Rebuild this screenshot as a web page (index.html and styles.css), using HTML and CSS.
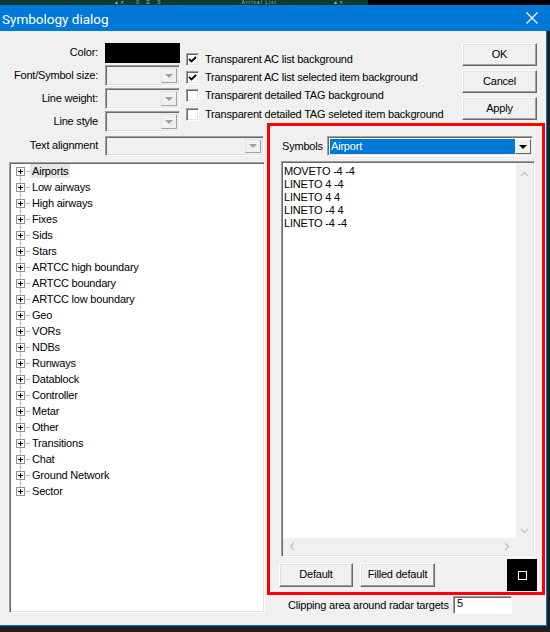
FILE: index.html
```html
<!DOCTYPE html>
<html lang="en">
<head>
  <meta charset="UTF-8">
  <title>Symbology dialog</title>
  <link rel="stylesheet" href="styles.css">
</head>
<body>
  <!-- radar screen strip behind the dialog -->
  <div class="strip">
    <div class="strip-bar">
      <span class="strip-txt s1">&#9650; &#10005;</span>
      <span class="strip-txt s2">0 E S</span>
      <span class="strip-txt s3">Arrival List</span>
      <span class="strip-txt s4">&#9650; &#10005;</span>
    </div>
  </div>

  <div class="window">
    <div class="titlebar">
      <span class="title">Symbology dialog</span>
      <svg class="close" viewBox="0 0 12 12" width="12" height="12">
        <path d="M0.5 0.5 L11.5 11.5 M11.5 0.5 L0.5 11.5" stroke="#fff" stroke-width="1.2" fill="none"/>
      </svg>
    </div>

    <div class="client">
      <!-- Left side -->
      <div class="col-left">
        <div class="upper">
          <div class="form">
            <div class="row"><span class="lbl">Color:</span><div class="swatch"></div></div>
            <div class="row"><span class="lbl">Font/Symbol size:</span><div class="combo"><span class="drop"><i class="tri"></i></span></div></div>
            <div class="row"><span class="lbl">Line weight:</span><div class="combo"><span class="drop"><i class="tri"></i></span></div></div>
            <div class="row"><span class="lbl">Line style</span><div class="combo"><span class="drop"><i class="tri"></i></span></div></div>
          </div>
          <div class="checks">
            <div class="check"><span class="box"><svg viewBox="0 0 11 11" width="11" height="11"><path d="M2 5 L4.5 7.5 L9 3" stroke="#000" stroke-width="1.8" fill="none"/></svg></span>Transparent AC list background</div>
            <div class="check"><span class="box"><svg viewBox="0 0 11 11" width="11" height="11"><path d="M2 5 L4.5 7.5 L9 3" stroke="#000" stroke-width="1.8" fill="none"/></svg></span>Transparent AC list selected item background</div>
            <div class="check"><span class="box"></span>Transparent detailed TAG background</div>
            <div class="check"><span class="box"></span>Transparent detailed TAG seleted item background</div>
          </div>
        </div>

        <div class="row align-row"><span class="lbl">Text alignment</span><div class="combo wide"><span class="drop"><i class="tri"></i></span></div></div>

        <div class="tree">
          <div class="node"><span class="plus"></span><span class="dots"></span><span class="name sel">Airports</span></div>
          <div class="node"><span class="plus"></span><span class="dots"></span><span class="name">Low airways</span></div>
          <div class="node"><span class="plus"></span><span class="dots"></span><span class="name">High airways</span></div>
          <div class="node"><span class="plus"></span><span class="dots"></span><span class="name">Fixes</span></div>
          <div class="node"><span class="plus"></span><span class="dots"></span><span class="name">Sids</span></div>
          <div class="node"><span class="plus"></span><span class="dots"></span><span class="name">Stars</span></div>
          <div class="node"><span class="plus"></span><span class="dots"></span><span class="name">ARTCC high boundary</span></div>
          <div class="node"><span class="plus"></span><span class="dots"></span><span class="name">ARTCC boundary</span></div>
          <div class="node"><span class="plus"></span><span class="dots"></span><span class="name">ARTCC low boundary</span></div>
          <div class="node"><span class="plus"></span><span class="dots"></span><span class="name">Geo</span></div>
          <div class="node"><span class="plus"></span><span class="dots"></span><span class="name">VORs</span></div>
          <div class="node"><span class="plus"></span><span class="dots"></span><span class="name">NDBs</span></div>
          <div class="node"><span class="plus"></span><span class="dots"></span><span class="name">Runways</span></div>
          <div class="node"><span class="plus"></span><span class="dots"></span><span class="name">Datablock</span></div>
          <div class="node"><span class="plus"></span><span class="dots"></span><span class="name">Controller</span></div>
          <div class="node"><span class="plus"></span><span class="dots"></span><span class="name">Metar</span></div>
          <div class="node"><span class="plus"></span><span class="dots"></span><span class="name">Other</span></div>
          <div class="node"><span class="plus"></span><span class="dots"></span><span class="name">Transitions</span></div>
          <div class="node"><span class="plus"></span><span class="dots"></span><span class="name">Chat</span></div>
          <div class="node"><span class="plus"></span><span class="dots"></span><span class="name">Ground Network</span></div>
          <div class="node"><span class="plus"></span><span class="dots"></span><span class="name">Sector</span></div>
        </div>
      </div>

      <!-- Right side -->
      <div class="col-right">
        <div class="btns">
          <button class="btn">OK</button>
          <button class="btn">Cancel</button>
          <button class="btn">Apply</button>
        </div>

        <div class="symbols-panel">
          <div class="sym-row">
            <span class="sym-lbl">Symbols</span>
            <div class="sym-combo">
              <span class="sym-value">Airport</span>
              <span class="drop dark"><i class="tri"></i></span>
            </div>
          </div>

          <div class="editor">
            <div class="editor-text">MOVETO -4 -4<br>LINETO 4 -4<br>LINETO 4 4<br>LINETO -4 4<br>LINETO -4 -4</div>
            <div class="vscroll">
              <svg viewBox="0 0 9 6" width="9" height="6"><path d="M1 5 L4.5 1.5 L8 5" stroke="#c8c8c8" stroke-width="1.5" fill="none"/></svg>
              <svg viewBox="0 0 9 6" width="9" height="6"><path d="M1 1 L4.5 4.5 L8 1" stroke="#c8c8c8" stroke-width="1.5" fill="none"/></svg>
            </div>
            <div class="hscroll">
              <svg viewBox="0 0 6 9" width="6" height="9"><path d="M5 1 L1.5 4.5 L5 8" stroke="#c8c8c8" stroke-width="1.5" fill="none"/></svg>
              <svg viewBox="0 0 6 9" width="6" height="9"><path d="M1 1 L4.5 4.5 L1 8" stroke="#c8c8c8" stroke-width="1.5" fill="none"/></svg>
            </div>
            <div class="corner"></div>
          </div>

          <div class="panel-btns">
            <button class="btn small">Default</button>
            <button class="btn small filled">Filled default</button>
            <div class="preview"><span class="preview-sq"></span></div>
          </div>
        </div>

        <div class="clip-row">
          <span class="clip-lbl">Clipping area around radar targets</span>
          <div class="clip-input">5</div>
        </div>
      </div>
    </div>
  </div>
</body>
</html>
```

FILE: styles.css
```css
/* General */
body {
  margin: 0;
  width: 550px;
  height: 632px;
  overflow: hidden;
  background-color: #1f1f1f;
  font-family: "Liberation Sans", Arial, sans-serif;
  font-size: 11px;
  letter-spacing: -0.2px;
  color: #000;
}

/* Radar strip behind the dialog */
.strip {
  height: 5px;
  display: flex;
  background-color: #000;
}

.strip-bar {
  width: 368px;
  display: flex;
  overflow: hidden;
  background-color: #0d3b2f;
  color: #9fb8ae;
  font-size: 5px;
  line-height: 5px;
  letter-spacing: 0;
}

.strip-txt {
  white-space: nowrap;
}

.s1 { margin-left: 114px; }
.s2 { margin-left: 12px; letter-spacing: 3px; }
.s3 { margin-left: 78px; letter-spacing: 1px; }
.s4 { margin-left: 56px; }

/* Window */
.window {
  width: 547px;
}

.titlebar {
  width: 550px;
  height: 26px;
  background-color: #0078d7;
  display: flex;
  align-items: center;
  justify-content: space-between;
}

.title {
  margin-left: 2px;
  margin-top: 1px;
  color: #fff;
  font-family: Roboto, "Noto Sans", sans-serif;
  font-size: 13.5px;
  letter-spacing: 0;
}

.close {
  margin-right: 12px;
}

.client {
  width: 546px;
  height: 594px;
  background-color: #f0f0f0;
  border-right: 1px solid #0078d7;
  border-bottom: 1px solid #0078d7;
  display: flex;
}

/* Left column */
.col-left {
  width: 266px;
  padding-top: 11px;
  display: flex;
  flex-direction: column;
}

.upper {
  display: flex;
}

.form {
  width: 180px;
  flex-shrink: 0;
}

.row {
  display: flex;
  align-items: center;
  height: 21px;
  margin-bottom: 2px;
}

.lbl {
  width: 98px;
  text-align: right;
  margin-right: 7px;
  padding-bottom: 2px;
  white-space: nowrap;
}

.swatch {
  width: 75px;
  height: 20px;
  background-color: #000;
}

.combo {
  width: 75px;
  height: 21px;
  box-sizing: border-box;
  background-color: #f0f0f0;
  border: 1px solid;
  border-color: #a0a0a0 #fff #fff #a0a0a0;
  box-shadow: inset 1px 1px #696969, inset -1px -1px #e3e3e3;
  display: flex;
  justify-content: flex-end;
  padding: 2px;
}

.combo.wide {
  width: 159px;
  height: 20px;
}

.drop {
  width: 16px;
  flex-shrink: 0;
  box-sizing: border-box;
  background-color: #f0f0f0;
  border: 1px solid;
  border-color: #e3e3e3 #a0a0a0 #a0a0a0 #e3e3e3;
  display: flex;
  align-items: center;
  justify-content: center;
}

.tri {
  width: 0;
  height: 0;
  border-left: 4px solid transparent;
  border-right: 4px solid transparent;
  border-top: 4px solid #a0a0a0;
}

.drop.dark {
  border-color: #fff #696969 #696969 #fff;
}

.drop.dark .tri {
  border-top-color: #000;
}

.checks {
  margin-left: 6px;
  padding-top: 11px;
  width: 80px;
  white-space: nowrap;
}

.check {
  height: 18px;
  display: flex;
  align-items: flex-start;
  line-height: 12px;
}

.check:last-child {
  margin-top: 1px;
}

.box {
  width: 13px;
  height: 13px;
  flex-shrink: 0;
  box-sizing: border-box;
  margin-right: 6px;
  background-color: #fff;
  border: 1px solid;
  border-color: #a0a0a0 #fff #fff #a0a0a0;
  box-shadow: inset 1px 1px #696969, inset -1px -1px #e3e3e3;
  display: flex;
  align-items: center;
  justify-content: center;
}

.align-row {
  margin-top: 2px;
  height: 20px;
}

/* Tree */
.tree {
  margin: 4px 0 0 9px;
  width: 256px;
  height: 451px;
  box-sizing: border-box;
  background-color: #fff;
  border: 1px solid;
  border-color: #a0a0a0 #fff #fff #a0a0a0;
  box-shadow: inset 1px 1px #696969, inset -1px -1px #e3e3e3;
  padding: 0 0 0 6px;
}

.node {
  position: relative;
  height: 16px;
  display: flex;
  align-items: center;
}

.node::before {
  content: "";
  position: absolute;
  left: 4px;
  top: 0;
  bottom: 0;
  border-left: 1px dotted #a0a0a0;
}

.node:first-child::before {
  top: 8px;
}

.node:last-child::before {
  bottom: 8px;
}

.plus {
  position: relative;
  z-index: 1;
  width: 9px;
  height: 9px;
  flex-shrink: 0;
  box-sizing: border-box;
  border: 1px solid #919191;
  background-color: #fff;
}

.plus::before {
  content: "";
  position: absolute;
  left: 1px;
  top: 3px;
  width: 5px;
  height: 1px;
  background-color: #000;
}

.plus::after {
  content: "";
  position: absolute;
  left: 3px;
  top: 1px;
  width: 1px;
  height: 5px;
  background-color: #000;
}

.dots {
  width: 4px;
  border-top: 1px dotted #a0a0a0;
  margin-left: 1px;
}

.name {
  padding: 1px 2px;
  white-space: nowrap;
}

.name.sel {
  background-color: #e6e6e6;
}

/* Right column */
.col-right {
  width: 280px;
  display: flex;
  flex-direction: column;
}

.btns {
  padding-top: 12px;
  margin-left: 196px;
  display: flex;
  flex-direction: column;
}

.btn {
  width: 75px;
  height: 23px;
  margin: 0 0 4px 0;
  padding: 0 0 2px 0;
  box-sizing: border-box;
  background-color: #f0f0f0;
  border: 1px solid;
  border-color: #fff #696969 #696969 #fff;
  box-shadow: inset -1px -1px #a0a0a0, inset 1px 1px #e3e3e3;
  font-family: "Liberation Sans", Arial, sans-serif;
  font-size: 11px;
  letter-spacing: -0.2px;
  color: #000;
}

.btns .btn:last-child {
  margin-bottom: 0;
}

.symbols-panel {
  margin: 3px 0 0 1px;
  width: 278px;
  height: 472px;
  box-sizing: border-box;
  border: 3px solid #f00;
  display: flex;
  flex-direction: column;
}

.sym-row {
  display: flex;
  align-items: center;
  height: 20px;
  margin-top: 10px;
  padding-left: 12px;
}

.sym-lbl {
  width: 45px;
  padding-bottom: 1px;
}

.sym-combo {
  width: 206px;
  height: 20px;
  box-sizing: border-box;
  background-color: #fff;
  border: 1px solid;
  border-color: #a0a0a0 #fff #fff #a0a0a0;
  box-shadow: inset 1px 1px #696969, inset -1px -1px #e3e3e3;
  padding: 2px 1px 1px 2px;
  display: flex;
}

.sym-value {
  flex: 1;
  background-color: #0078d7;
  color: #fff;
  line-height: 15px;
  padding-left: 1px;
}

.editor {
  margin: 5px 0 0 11px;
  width: 254px;
  height: 396px;
  box-sizing: border-box;
  background-color: #fff;
  border: 1px solid;
  border-color: #a0a0a0 #fff #fff #a0a0a0;
  box-shadow: inset 1px 1px #696969, inset -1px -1px #e3e3e3;
  padding: 2px 1px 1px 1px;
  display: grid;
  grid-template-columns: 1fr 17px;
  grid-template-rows: 1fr 17px;
}

.editor-text {
  line-height: 13px;
  padding: 1px 0 0 1px;
}

.vscroll {
  background-color: #f0f0f0;
  display: flex;
  flex-direction: column;
  justify-content: space-between;
  align-items: center;
  padding: 7px 0 4px 0;
}

.hscroll {
  background-color: #f0f0f0;
  display: flex;
  justify-content: space-between;
  align-items: center;
  padding: 0 6px 0 6px;
}

.corner {
  background-color: #f0f0f0;
}

.panel-btns {
  display: flex;
  align-items: center;
  height: 32px;
  margin-top: 2px;
  padding-left: 9px;
}

.btn.small {
  width: 74px;
  height: 24px;
  margin: 0;
}

.btn.small.filled {
  width: 75px;
  margin-left: 7px;
}

.preview {
  margin-left: auto;
  margin-right: 5px;
  width: 30px;
  height: 32px;
  background-color: #000;
  display: flex;
  align-items: center;
  justify-content: center;
}

.preview-sq {
  width: 9px;
  height: 9px;
  box-sizing: border-box;
  border: 1.5px solid #fff;
}

.clip-row {
  display: flex;
  align-items: center;
  height: 18px;
  margin-top: 1px;
  padding-left: 22px;
}

.clip-lbl {
  width: 165px;
  white-space: nowrap;
}

.clip-input {
  width: 59px;
  height: 18px;
  box-sizing: border-box;
  background-color: #fff;
  border: 1px solid;
  border-color: #a0a0a0 #fff #fff #a0a0a0;
  box-shadow: inset 1px 1px #696969;
  padding: 0 0 0 3px;
  line-height: 13px;
}
```
